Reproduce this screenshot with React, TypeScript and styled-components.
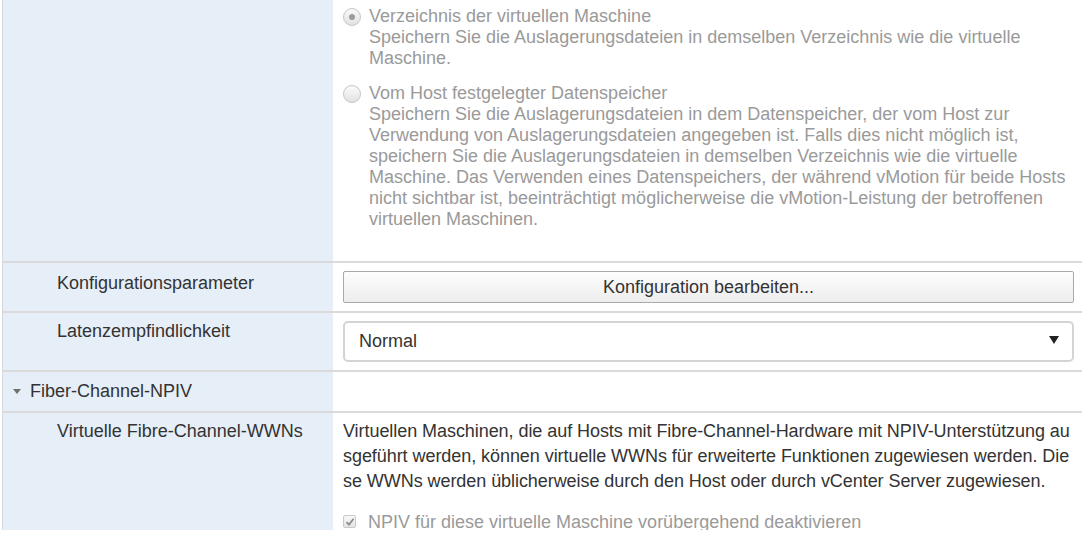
import React from 'react';
import styled, { createGlobalStyle } from 'styled-components';

const GlobalStyle = createGlobalStyle`
  html, body {
    margin: 0;
    padding: 0;
    background: #fff;
  }
  body {
    font-family: "Liberation Sans", Arial, sans-serif;
    font-size: 18px;
    color: #333;
  }
`;

// scrollbarer Bereich des Dialogs
const Viewport = styled.div`
  height: 530px;
  overflow: hidden;
  padding-left: 2px;
`;

const Table = styled.div`
  border-left: 1px solid #d3d9e0;
`;

const Row = styled.div<{ $last?: boolean }>`
  display: grid;
  grid-template-columns: 330px 1fr;
  border-bottom: ${(p) => (p.$last ? 'none' : '2px solid #dadada')};
`;

const LabelCell = styled.div<{ $indent?: number; $top?: number }>`
  background: #e6eef7;
  padding: ${(p) => p.$top ?? 9}px 8px 9px ${(p) => p.$indent ?? 54}px;
  line-height: 21px;
  color: #333;
  display: flex;
  align-items: flex-start;
  gap: 9px;
`;

const ValueCell = styled.div<{ $top?: number; $bottom?: number }>`
  padding: ${(p) => p.$top ?? 8}px 8px ${(p) => p.$bottom ?? 8}px 10px;
  min-width: 0;
`;

const Option = styled.label`
  display: flex;
  align-items: flex-start;
  gap: 8px;
  line-height: 21px;
  color: #9a9a9a;
  & + & {
    margin-top: 14px;
  }
`;

const OptionText = styled.div`
  flex: 1;
`;

// Radio-Knopf (deaktiviert)
const Radio = styled.span<{ $checked?: boolean }>`
  flex: none;
  width: 16px;
  height: 16px;
  margin-top: 2px;
  border-radius: 50%;
  border: 1px solid #c6c6c6;
  background: linear-gradient(#fafafa, #e2e2e2);
  display: flex;
  align-items: center;
  justify-content: center;
  &::after {
    content: '';
    display: ${(p) => (p.$checked ? 'block' : 'none')};
    width: 6px;
    height: 6px;
    border-radius: 50%;
    background: #9c9c9c;
  }
`;

const Button = styled.button`
  display: block;
  width: 100%;
  height: 32px;
  border: 1px solid #a9a9a9;
  border-radius: 2px;
  background: linear-gradient(#fdfdfd, #ededed);
  font-family: inherit;
  font-size: 18px;
  color: #333;
`;

const Select = styled.div`
  height: 41px;
  box-sizing: border-box;
  border: 2px solid #d4d4d4;
  border-radius: 5px;
  display: flex;
  align-items: center;
  justify-content: space-between;
  padding: 0 13px 0 14px;
  color: #333;
`;

const SelectArrow = styled.span`
  width: 0;
  height: 0;
  border-left: 5px solid transparent;
  border-right: 5px solid transparent;
  border-top: 8px solid #222;
  margin-top: -3px;
`;

const Caret = styled.span`
  flex: none;
  width: 0;
  height: 0;
  margin-top: 8px;
  border-left: 4px solid transparent;
  border-right: 4px solid transparent;
  border-top: 5px solid #707070;
`;

const Description = styled.p`
  margin: 0 -1px 0 0;
  line-height: 25px;
  letter-spacing: -0.06px;
  color: #333;
  word-break: break-all;
`;

const CheckRow = styled.div`
  display: flex;
  align-items: flex-start;
  gap: 12px;
  margin-top: 18px;
  line-height: 21px;
  color: #9a9a9a;
`;

const CheckBox = styled.span`
  flex: none;
  width: 13px;
  height: 13px;
  margin-top: 3px;
  box-sizing: border-box;
  border: 1px solid #c9c9c9;
  border-radius: 2px;
  background: linear-gradient(#f8f8f8, #e4e4e4);
  display: flex;
  align-items: center;
  justify-content: center;
`;

function Check() {
  return (
    <svg width="10" height="10" viewBox="0 0 10 10">
      <path d="M1.5 5.2 L4 7.6 L8.6 1.8" fill="none" stroke="#8d8d8d" strokeWidth="1.8" />
    </svg>
  );
}

function App() {
  return (
    <>
      <GlobalStyle />
      <Viewport>
        <Table>
          <Row>
            <LabelCell />
            <ValueCell $top={6} $bottom={31}>
              <Option>
                <Radio $checked />
                <OptionText>
                  Verzeichnis der virtuellen Maschine
                  <br />
                  Speichern Sie die Auslagerungsdateien in demselben Verzeichnis wie die virtuelle
                  Maschine.
                </OptionText>
              </Option>
              <Option>
                <Radio />
                <OptionText>
                  Vom Host festgelegter Datenspeicher
                  <br />
                  Speichern Sie die Auslagerungsdateien in dem Datenspeicher, der vom Host zur
                  Verwendung von Auslagerungsdateien angegeben ist. Falls dies nicht möglich ist,
                  speichern Sie die Auslagerungsdateien in demselben Verzeichnis wie die virtuelle
                  Maschine. Das Verwenden eines Datenspeichers, der während vMotion für beide Hosts
                  nicht sichtbar ist, beeinträchtigt möglicherweise die vMotion-Leistung der
                  betroffenen virtuellen Maschinen.
                </OptionText>
              </Option>
            </ValueCell>
          </Row>

          <Row>
            <LabelCell $top={10}>Konfigurationsparameter</LabelCell>
            <ValueCell>
              <Button>Konfiguration bearbeiten...</Button>
            </ValueCell>
          </Row>

          <Row>
            <LabelCell $top={8}>Latenzempfindlichkeit</LabelCell>
            <ValueCell>
              <Select>
                Normal
                <SelectArrow />
              </Select>
            </ValueCell>
          </Row>

          <Row>
            <LabelCell $indent={10}>
              <Caret />
              Fiber-Channel-NPIV
            </LabelCell>
            <ValueCell />
          </Row>

          <Row $last>
            <LabelCell $top={8}>Virtuelle Fibre-Channel-WWNs</LabelCell>
            <ValueCell $top={6}>
              <Description>
                Virtuellen Maschinen, die auf Hosts mit Fibre-Channel-Hardware mit NPIV-Unterstützung
                ausgeführt werden, können virtuelle WWNs für erweiterte Funktionen zugewiesen werden.
                Diese WWNs werden üblicherweise durch den Host oder durch vCenter Server zugewiesen.
              </Description>
              <CheckRow>
                <CheckBox>
                  <Check />
                </CheckBox>
                NPIV für diese virtuelle Maschine vorübergehend deaktivieren
              </CheckRow>
              <div style={{ height: 60 }} />
            </ValueCell>
          </Row>
        </Table>
      </Viewport>
    </>
  );
}

export default App;
